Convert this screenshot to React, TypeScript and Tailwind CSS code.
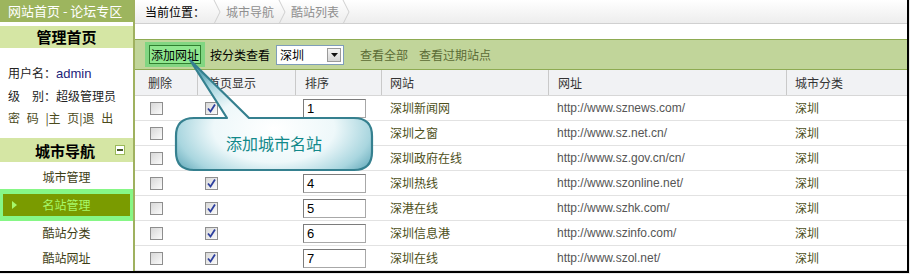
import React from "react";

const cjk = "font-['Noto_Sans_CJK_SC',sans-serif]";
const latin = "font-['Liberation_Sans',Arial,sans-serif]";

const sites = [
  { sort: "1", name: "深圳新闻网", url: "http://www.sznews.com/" },
  { sort: "2", name: "深圳之窗", url: "http://www.sz.net.cn/" },
  { sort: "3", name: "深圳政府在线", url: "http://www.sz.gov.cn/cn/" },
  { sort: "4", name: "深圳热线", url: "http://www.szonline.net/" },
  { sort: "5", name: "深港在线", url: "http://www.szhk.com/" },
  { sort: "6", name: "深圳信息港", url: "http://www.szinfo.com/" },
  { sort: "7", name: "深圳在线", url: "http://www.szol.net/" },
];

function Checkbox({ checked }: { checked?: boolean }) {
  return (
    <span className="relative block h-[13px] w-[13px] border border-[#8e8e8e] bg-gradient-to-br from-[#d8d8d8] to-[#fbfbfb]">
      {checked && (
        <svg width="11" height="11" viewBox="0 0 11 11" className="absolute left-0 top-0">
          <path d="M2 5.5 L4.5 8.5 L9 1.5" stroke="#2d3f9e" strokeWidth="1.8" fill="none" />
        </svg>
      )}
    </span>
  );
}

function Crumb() {
  return (
    <svg width="9" height="24" viewBox="0 0 9 24" className="shrink-0">
      <path d="M1 0 L7 12 L1 24" stroke="#cfcfcf" strokeWidth="1" fill="none" />
    </svg>
  );
}

function Sidebar() {
  const item = "flex items-center justify-center text-[12px] text-[#3e3e14]";
  return (
    <div className="flex h-full w-[135px] shrink-0 flex-col overflow-hidden border-r-2 border-[#9fb15f]">
      <div className="h-[22px] bg-[#9db55e] pl-[8px] text-[13px] leading-[22px] text-white">网站首页 - 论坛专区</div>
      <div className="mt-[4px] h-[22px] bg-[#d5e6a4] text-center text-[15px] font-bold leading-[22px] text-black">管理首页</div>
      <div className="pl-[8px] pt-[14px] text-[12px] leading-[22px] text-[#222]">
        <div>
          用户名：<span className={`${latin} text-[13px] text-[#23237a]`}>admin</span>
        </div>
        <div>级　别：超级管理员</div>
        <div className="whitespace-pre text-[#4b4b1c] [word-spacing:4px]">密 码 |主 页|退 出</div>
      </div>
      <div className="mt-[9px] flex h-[27px] items-center bg-[#d5e6a4] pl-[35px]">
        <span className="text-[15px] font-bold leading-none text-black">城市导航</span>
        <span className="ml-[20px] flex h-[10px] w-[10px] items-center justify-center border border-[#9ab85a] bg-white">
          <span className="block h-[2px] w-[6px] bg-[#4a5a2a]" />
        </span>
      </div>
      <div className="mt-[2px] flex flex-col">
        <div className={`${item} h-[25px]`}>城市管理</div>
        <div className="h-[32px] bg-[#86f786] px-[3px] py-[5px]">
          <div className="relative flex h-[22px] items-center justify-center bg-[#7a9b00] text-[12px] text-[#a6f86a]">
            <svg width="5" height="8" viewBox="0 0 5 8" className="absolute left-[9px] top-[7px]">
              <path d="M0 0 L5 4 L0 8 Z" fill="#a6f86a" />
            </svg>
            名站管理
          </div>
        </div>
        <div className={`${item} h-[23px]`}>酷站分类</div>
        <div className={`${item} h-[27px]`}>酷站网址</div>
      </div>
    </div>
  );
}

function Callout() {
  return (
    <div className="absolute left-[172px] top-[56px] h-[118px] w-[206px]">
      <svg width="206" height="118" viewBox="0 0 206 118" className="absolute left-0 top-0">
        <defs>
          <radialGradient id="cg" cx="50%" cy="62%" r="62%">
            <stop offset="0%" stopColor="#ffffff" />
            <stop offset="50%" stopColor="#eef8fa" />
            <stop offset="80%" stopColor="#a9d6df" />
            <stop offset="100%" stopColor="#5ea6b7" />
          </radialGradient>
        </defs>
        <path
          d="M22 62 L55 62 L18 4 L77 62 L182 62 Q200 62 200 80 L200 96 Q200 114 182 114 L22 114 Q4 114 4 96 L4 80 Q4 62 22 62 Z"
          fill="url(#cg)"
          stroke="#35808f"
          strokeWidth="2.2"
          strokeLinejoin="round"
        />
      </svg>
      <div className="absolute left-[4px] top-[62px] flex h-[52px] w-[196px] items-center justify-center pb-[2px] text-[16px] text-[#12898a]">
        添加城市名站
      </div>
    </div>
  );
}

export default function App() {
  const head = "flex items-center border-r border-[#c9c9c9] text-[12px] text-[#333]";
  return (
    <div className={`h-[274px] w-[910px] overflow-hidden bg-[#ececec] ${cjk}`}>
      <div className="relative flex h-[273px] w-[909px] border-b-2 border-r-2 border-black bg-white">
        <Sidebar />
        <div className="flex min-w-0 flex-1 flex-col">
          <div className="flex h-[24px] items-center border-b border-[#d0d0d0] bg-gradient-to-b from-white to-[#ededed] pl-[10px] text-[12px]">
            <span className="text-black">当前位置：</span>
            <span className="ml-[8px]"><Crumb /></span>
            <span className="ml-[4px] text-[#8f8f8f]">城市导航</span>
            <span className="ml-[4px]"><Crumb /></span>
            <span className="ml-[4px] text-[#8f8f8f]">酷站列表</span>
            <span className="ml-[3px]"><Crumb /></span>
          </div>
          <div className="mt-[15px] flex h-[31px] items-center border-y border-[#8eab52] bg-[#c1d59a] pl-[10px] text-[12px]">
            <div className="bg-[#82d682] px-[4px] py-[3px]">
              <div className="flex h-[19px] w-[52px] items-center justify-center border border-[#2f7f2f] bg-[#8fe78f] leading-none text-black">
                添加网址
              </div>
            </div>
            <span className="ml-[5px] text-black">按分类查看</span>
            <div className="ml-[6px] flex h-[20px] w-[68px] items-center justify-between border border-[#7f9db9] bg-white pl-[3px] pr-[2px]">
              <span className="leading-none text-black">深圳</span>
              <span className="flex h-[14px] w-[14px] items-center justify-center border border-[#9a9a9a] bg-gradient-to-b from-[#f4f4f4] to-[#d6d6d6]">
                <svg width="7" height="4" viewBox="0 0 7 4"><path d="M0 0 L7 0 L3.5 4 Z" fill="#111" /></svg>
              </span>
            </div>
            <span className="ml-[16px] text-[#5b6b35]">查看全部</span>
            <span className="ml-[11px] text-[#5b6b35]">查看过期站点</span>
          </div>
          <div className="grid h-[26px] grid-cols-[63px_98px_86px_167px_238px_120px] border-b border-[#d7d7d7] bg-[#f1f2f4]">
            <div className={`${head} pl-[13px]`}>删除</div>
            <div className={`${head} pl-[10px]`}>首页显示</div>
            <div className={`${head} pl-[9px]`}>排序</div>
            <div className={`${head} pl-[8px]`}>网站</div>
            <div className={`${head} pl-[9px]`}>网址</div>
            <div className="flex items-center pl-[8px] text-[12px] text-[#333]">城市分类</div>
          </div>
          {sites.map((s) => (
            <div
              key={s.sort}
              className="grid h-[25px] shrink-0 grid-cols-[63px_98px_86px_167px_238px_120px] items-center border-b border-[#e2e2e2] text-[12px]"
            >
              <div className="pl-[15px]"><Checkbox /></div>
              <div className="pl-[7px]"><Checkbox checked /></div>
              <div className="pl-[7px]">
                <div className={`h-[19px] w-[63px] border border-[#a8a8a8] border-l-[#7c7c7c] border-t-[#7c7c7c] bg-white pl-[3px] ${latin} text-[13px] leading-[17px] text-black`}>
                  {s.sort}
                </div>
              </div>
              <div className="pl-[8px] text-[#4d5019]">{s.name}</div>
              <div className={`pl-[8px] ${latin} text-[#555]`}>{s.url}</div>
              <div className="pl-[8px] text-[#4d5019]">深圳</div>
            </div>
          ))}
        </div>
        <Callout />
      </div>
    </div>
  );
}
